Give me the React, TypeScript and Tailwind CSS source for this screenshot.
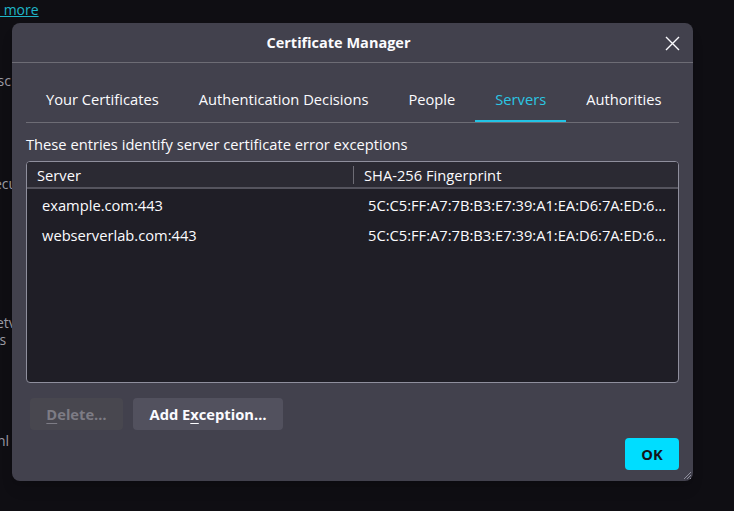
import React, { useState } from "react";

const rows = [
  { server: "example.com:443", fp: "5C:C5:FF:A7:7B:B3:E7:39:A1:EA:D6:7A:ED:6A:2F:11:90:4C" },
  { server: "webserverlab.com:443", fp: "5C:C5:FF:A7:7B:B3:E7:39:A1:EA:D6:7A:ED:6A:2F:11:90:4C" },
];

const tabs = ["Your Certificates", "Authentication Decisions", "People", "Servers", "Authorities"];

const App: React.FC = () => {
  const [active, setActive] = useState<string>("Servers");

  return (
    <div
      className="relative w-[734px] h-[511px] overflow-hidden bg-[#0f0e13] text-[#fbfbfe]"
      style={{ fontFamily: '"Open Sans", "Noto Sans", sans-serif' }}
    >
      {/* page behind the dialog */}
      <div className="flex flex-col text-[14px] text-[#9c9ba5]">
        <a className="mt-[1px] h-[18px] text-[#1fb5c8] underline leading-[18px]">&nbsp;more</a>
        <span className="mt-[53px] -ml-[6px] leading-[18px]">isc</span>
        <span className="mt-[85px] -ml-[6px] leading-[18px]">ecu</span>
        <span className="mt-[122px] -ml-[4px] leading-[16px]">etv</span>
        <span className="mt-[1px] -ml-[4px] leading-[16px]">is</span>
        <span className="mt-[84px] -ml-[3px] leading-[18px]">nl</span>
      </div>

      {/* dialog */}
      <div className="absolute left-[12px] top-[23px] w-[681px] h-[458px] rounded-[8px] bg-[#42414d] shadow-lg flex flex-col">
        <div className="relative h-[40px] flex items-center justify-center pr-[28px] border-b border-[#6d6c75]">
          <h1 className="text-[14.5px] font-bold">Certificate Manager</h1>
          <button className="absolute right-[13px] top-[12px] w-[16px] h-[16px] flex items-center justify-center">
            <svg width="15" height="15" viewBox="0 0 15 15" fill="none" stroke="#fbfbfe" strokeWidth="1.4">
              <path d="M1 1 L14 14 M14 1 L1 14" />
            </svg>
          </button>
        </div>

        <div className="flex flex-col flex-1 px-[14px]">
          <div className="mt-[15px] flex border-b border-[#6d6c75]">
            {tabs.map((t) => (
              <button
                key={t}
                onClick={() => setActive(t)}
                className={
                  "h-[44px] px-[20px] pt-[1px] text-[14.7px] whitespace-nowrap border-b-[2px] " +
                  (active === t ? "text-[#2bc6e3] border-[#22c4e6]" : "text-[#fbfbfe] border-transparent")
                }
              >
                {t}
              </button>
            ))}
          </div>

          <p className="mt-[12px] text-[14.7px] leading-[18px]">These entries identify server certificate error exceptions</p>

          <div className="mt-[8px] h-[222px] rounded-[4px] border border-[#8f8f9d] bg-[#1f1e26] overflow-hidden flex flex-col">
            <div className="h-[27px] flex items-center bg-[#2b2a33] border-b-[2px] border-[#55545e] text-[14.7px] shrink-0">
              <div className="w-[326px] pl-[10px] pt-[1px]">Server</div>
              <div className="h-[18px] w-px bg-[#6d6c75]" />
              <div className="pl-[10px] pt-[1px]">SHA-256 Fingerprint</div>
            </div>
            <div className="pt-[1px]">
              {rows.map((r) => (
                <div key={r.server} className="h-[30px] flex items-center text-[14.7px]">
                  <div className="w-[327px] pl-[15px] whitespace-nowrap">{r.server}</div>
                  <div className="flex-1 min-w-0 pl-[14px] pr-[5px] whitespace-nowrap overflow-hidden text-ellipsis">{r.fp}</div>
                </div>
              ))}
            </div>
          </div>

          <div className="mt-[15px] flex gap-[10px] pl-[4px]">
            <button className="h-[32px] w-[93px] rounded-[4px] bg-[#48474f] text-[#7d7c85] text-[14.7px] font-bold">
              <span className="underline underline-offset-[3px]">D</span>elete…
            </button>
            <button className="h-[32px] w-[150px] rounded-[4px] bg-[#52515e] text-[14.7px] font-bold">
              Add E<span className="underline underline-offset-[3px]">x</span>ception…
            </button>
          </div>

          <div className="mt-[8px] flex justify-end">
            <button className="h-[32px] w-[54px] rounded-[4px] bg-[#00ddff] text-[#15141a] text-[14.7px] font-bold">
              OK
            </button>
          </div>
        </div>

        <svg className="absolute right-[1px] bottom-[1px]" width="10" height="10" viewBox="0 0 10 10" stroke="#8f8f9d" strokeWidth="1">
          <path d="M9 2 L2 9 M9 5 L5 9 M9 8 L8 9" />
        </svg>
      </div>
    </div>
  );
};

export default App;
